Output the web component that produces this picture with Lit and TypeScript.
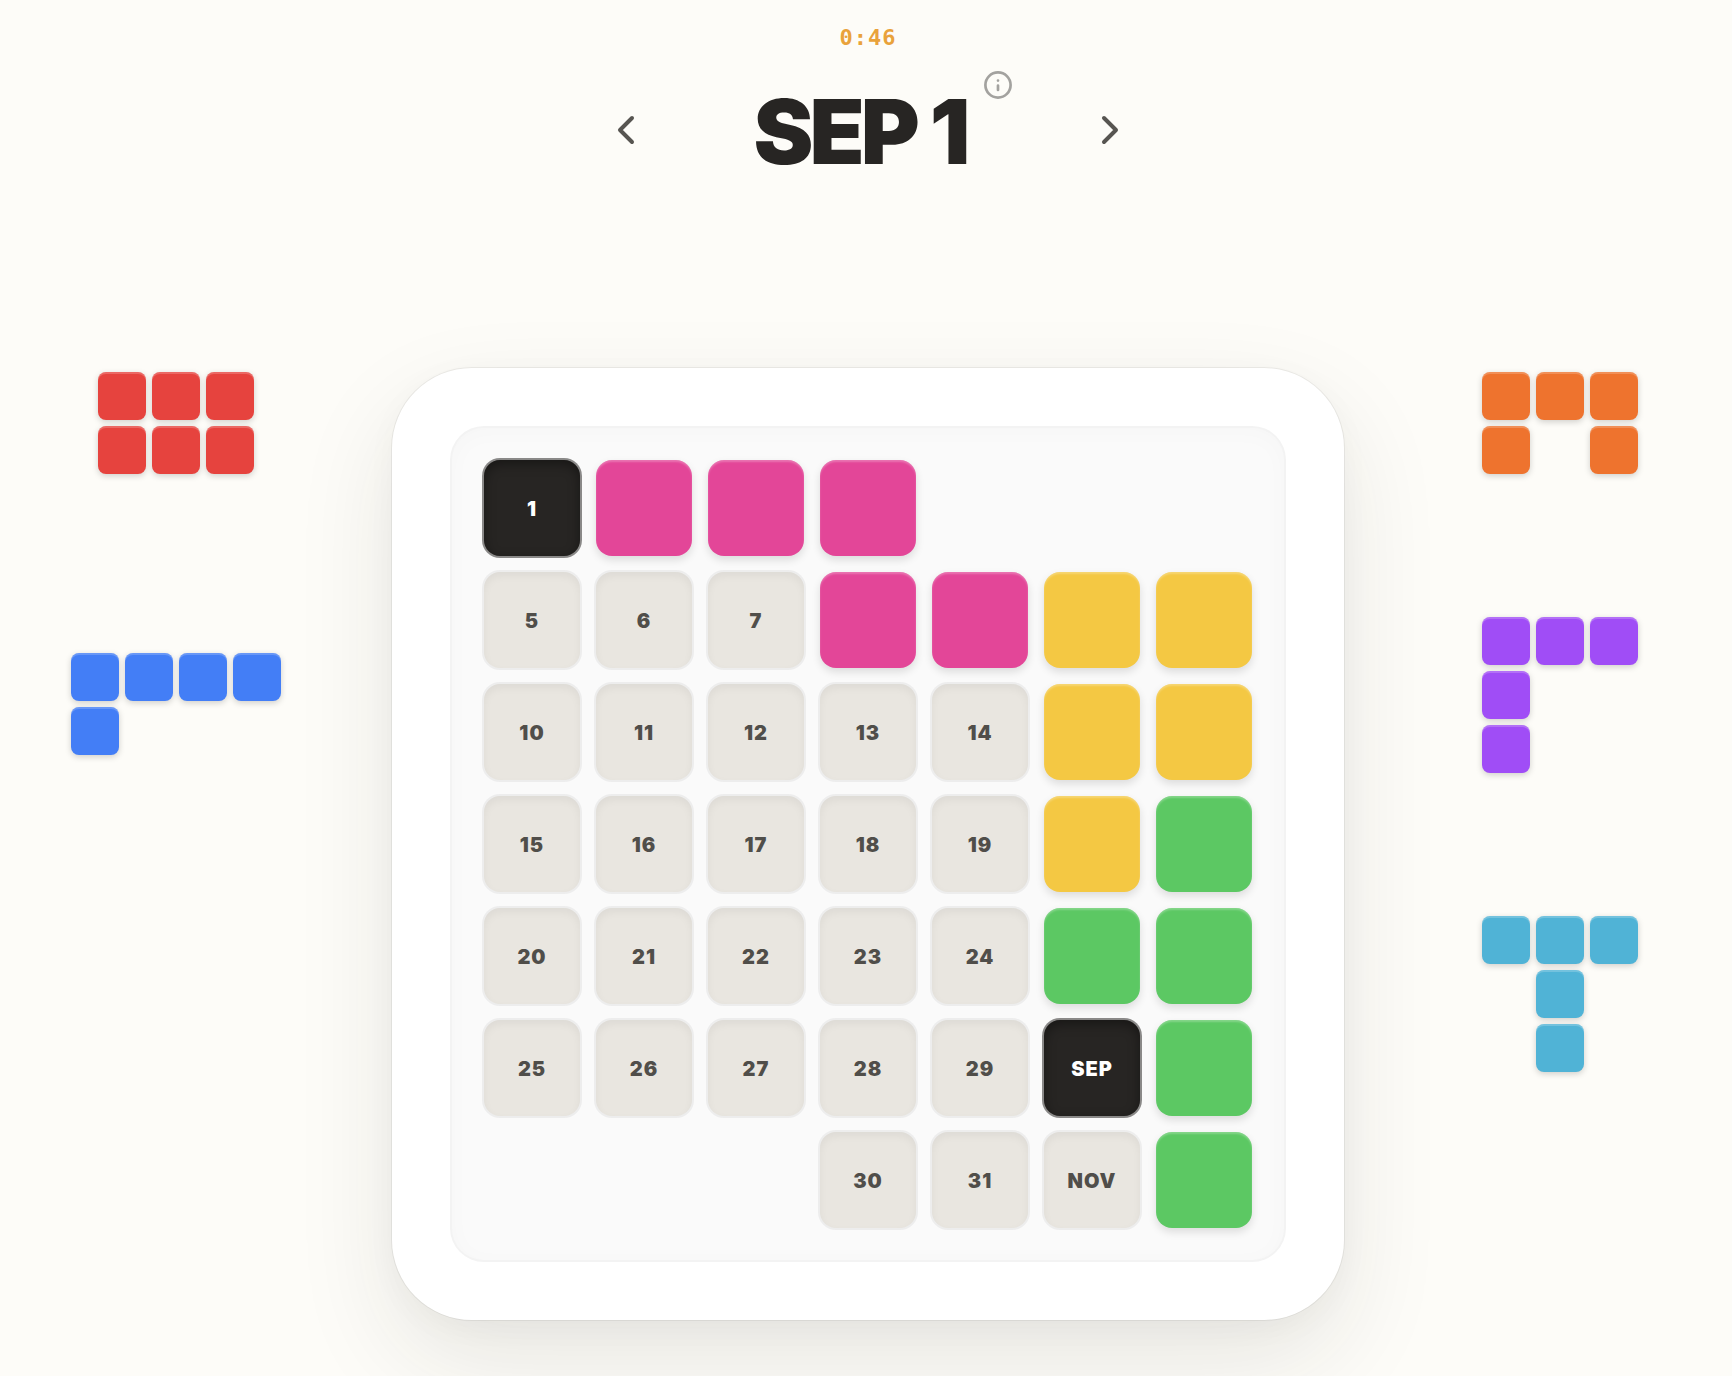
import { LitElement, html, css, svg } from "lit";
import { customElement, property } from "lit/decorators.js";
import { classMap } from "lit/directives/class-map.js";

type Colour = "red" | "blue" | "orange" | "purple" | "teal" | "pink" | "yellow" | "green";

interface Piece {
  name: string;
  colour: Colour;
  shape: string[];
}

interface Cell {
  label?: string;
  target?: boolean;
  fill?: Colour;
}

const LEFT_PIECES: Piece[] = [
  { name: "Red piece", colour: "red", shape: ["###", "###"] },
  { name: "Blue piece", colour: "blue", shape: ["####", "#..."] },
];

const RIGHT_PIECES: Piece[] = [
  { name: "Orange piece", colour: "orange", shape: ["###", "#.#"] },
  { name: "Purple piece", colour: "purple", shape: ["###", "#..", "#.."] },
  { name: "Teal piece", colour: "teal", shape: ["###", ".#.", ".#."] },
];

const day = (label: string | number): Cell => ({ label: String(label) });
const goal = (label: string): Cell => ({ label, target: true });
const filled = (fill: Colour): Cell => ({ fill });
const none: Cell = {};

const BOARD: Cell[][] = [
  [goal("1"), filled("pink"), filled("pink"), filled("pink"), none, none, none],
  [day(5), day(6), day(7), filled("pink"), filled("pink"), filled("yellow"), filled("yellow")],
  [day(10), day(11), day(12), day(13), day(14), filled("yellow"), filled("yellow")],
  [day(15), day(16), day(17), day(18), day(19), filled("yellow"), filled("green")],
  [day(20), day(21), day(22), day(23), day(24), filled("green"), filled("green")],
  [day(25), day(26), day(27), day(28), day(29), goal("SEP"), filled("green")],
  [none, none, none, day(30), day(31), day("NOV"), filled("green")],
];

const palette = css`
  .red { background: #e6433e; }
  .blue { background: #437ef6; }
  .orange { background: #ee732e; }
  .purple { background: #a04df6; }
  .teal { background: #50b3d6; }
  .pink { background: #e34698; }
  .yellow { background: #f4c843; }
  .green { background: #5cc863; }
`;

@customElement("puzzle-piece")
export class PuzzlePiece extends LitElement {
  @property({ attribute: false }) piece!: Piece;

  static styles = [
    palette,
    css`
      :host {
        display: block;
      }
      .piece {
        display: grid;
        gap: 6px;
        padding: 0;
        border: 0;
        background: none;
        cursor: grab;
      }
      .row {
        display: flex;
        gap: 6px;
      }
      .block {
        width: 48px;
        height: 48px;
        border-radius: 8px;
      }
      .solid {
        box-shadow: inset 0 2px 0 rgba(255, 255, 255, 0.2), 0 2px 6px rgba(0, 0, 0, 0.18);
      }
    `,
  ];

  render() {
    const { name, colour, shape } = this.piece;
    return html`<button class="piece" type="button" aria-label=${name}>
      ${shape.map(
        (row) => html`<span class="row"
          >${[...row].map(
            (c) => html`<span class=${classMap({ block: true, solid: c === "#", [colour]: c === "#" })}></span>`,
          )}</span
        >`,
      )}
    </button>`;
  }
}

@customElement("puzzle-board")
export class PuzzleBoard extends LitElement {
  static styles = [
    palette,
    css`
      :host {
        display: block;
      }
      .frame {
        padding: 60px;
        border-radius: 80px;
        background: #fff;
        box-shadow: 0 0 0 1px rgba(0, 0, 0, 0.06), 0 40px 100px rgba(40, 38, 30, 0.1),
          0 8px 32px rgba(40, 38, 30, 0.03);
      }
      .well {
        display: grid;
        grid-template-columns: repeat(7, 1fr);
        gap: 16px;
        padding: 32px;
        border-radius: 32px;
        background: #fafafa;
        box-shadow: 0 0 0 2px #f3f3f3, inset 0 4px 24px rgba(0, 0, 0, 0.02);
      }
      .cell {
        display: flex;
        align-items: center;
        justify-content: center;
        box-sizing: border-box;
        aspect-ratio: 1;
        padding-top: 2px;
        border-radius: 16px;
        font-size: 20px;
        font-weight: 900;
        line-height: 24px;
        letter-spacing: 1px;
      }
      .day {
        background: #e9e6e0;
        color: #504e4a;
        box-shadow: 0 0 0 2px #ededed, inset 0 4px 8px rgba(0, 0, 0, 0.05);
      }
      .target {
        background: #272523;
        color: #fff;
        box-shadow: 0 0 0 2px #8a8988, inset 0 4px 12px rgba(0, 0, 0, 0.4);
      }
      .filled {
        box-shadow: inset 0 2px 2px rgba(255, 255, 255, 0.25), 0 4px 8px rgba(0, 0, 0, 0.12);
      }
    `,
  ];

  render() {
    return html`<div class="frame">
      <div class="well">
        ${BOARD.flat().map((c) => {
          const classes = {
            cell: true,
            day: !!c.label && !c.target,
            target: !!c.target,
            filled: !!c.fill,
            [c.fill ?? "empty"]: true,
          };
          return html`<div class=${classMap(classes)}>${c.label ?? ""}</div>`;
        })}
      </div>
    </div>`;
  }
}

const chevron = (d: string) =>
  svg`<path d=${d} fill="none" stroke="currentColor" stroke-width="2" stroke-linecap="round" stroke-linejoin="round"></path>`;

@customElement("app-root")
export class AppRoot extends LitElement {
  static styles = css`
    :host {
      display: block;
      box-sizing: border-box;
      min-height: 100vh;
      padding-left: 4px;
      overflow: hidden;
      background: #fdfcf8;
      color: #272523;
      font-family: Inter, "Liberation Sans", sans-serif;
    }
    header {
      display: flex;
      flex-direction: column;
      align-items: center;
      padding-top: 24px;
    }
    .timer {
      color: #e9a23b;
      font-family: "DejaVu Sans Mono", monospace;
      font-size: 22px;
      font-weight: 700;
      line-height: 28px;
      letter-spacing: 1px;
    }
    .date {
      display: flex;
      align-items: center;
      gap: 56px;
      margin-top: 30px;
    }
    .step {
      display: flex;
      padding: 0;
      border: 0;
      background: none;
      color: #575551;
      cursor: pointer;
    }
    .step svg {
      width: 48px;
      height: 48px;
    }
    .title {
      position: relative;
      width: 324px;
    }
    h1 {
      margin: 0;
      padding: 4px 16px 0 0;
      text-align: center;
      font-size: 90px;
      font-weight: 900;
      line-height: 92px;
      letter-spacing: -4px;
    }
    .info {
      position: absolute;
      top: -13px;
      right: 16px;
      display: flex;
      padding: 0;
      border: 0;
      background: none;
      color: #a3a29f;
      cursor: pointer;
    }
    .info svg {
      width: 32px;
      height: 32px;
    }
    main {
      display: grid;
      grid-template-columns: 1fr 952px 1fr;
      margin-top: 190px;
      padding-bottom: 56px;
    }
    .tray {
      display: flex;
      flex-direction: column;
      align-items: center;
      padding-top: 4px;
    }
    .left {
      gap: 179px;
      padding-right: 44px;
    }
    .right {
      gap: 143px;
      padding-left: 44px;
    }
  `;

  render() {
    return html`
      <header>
        <div class="timer" role="timer">0:46</div>
        <div class="date">
          <button class="step" type="button" aria-label="Previous day">
            <svg viewBox="0 0 24 24">${chevron("M15 18 9 12l6-6")}</svg>
          </button>
          <div class="title">
            <h1>SEP 1</h1>
            <button class="info" type="button" aria-label="How to play">
              <svg viewBox="0 0 32 32" fill="none" stroke="currentColor" stroke-width="2.7" stroke-linecap="round">
                <circle cx="16" cy="16" r="12.6"></circle>
                <path d="M16 16.6v4.4M16 11.5v.1"></path>
              </svg>
            </button>
          </div>
          <button class="step" type="button" aria-label="Next day">
            <svg viewBox="0 0 24 24">${chevron("m9 18 6-6-6-6")}</svg>
          </button>
        </div>
      </header>
      <main>
        <div class="tray left">${LEFT_PIECES.map((p) => html`<puzzle-piece .piece=${p}></puzzle-piece>`)}</div>
        <puzzle-board></puzzle-board>
        <div class="tray right">${RIGHT_PIECES.map((p) => html`<puzzle-piece .piece=${p}></puzzle-piece>`)}</div>
      </main>
    `;
  }
}
